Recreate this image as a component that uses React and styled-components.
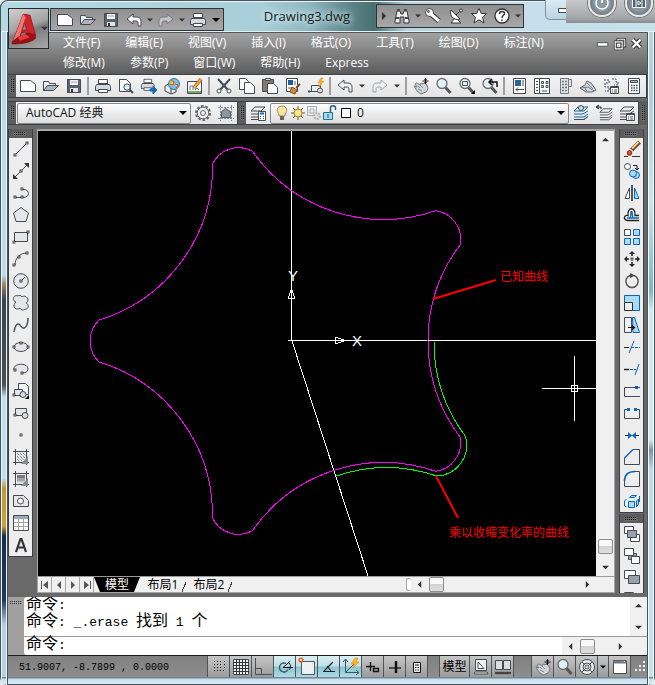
import React, { useState } from 'react';
import styled, { createGlobalStyle, css } from 'styled-components';

const colors = {
  chrome: '#696969',
  panel: '#ededed',
  line: '#3c3f44',
  ink: '#454b54',
  blue: '#0a66b8',
  sky: '#a9dcf2',
  magenta: '#ff00ff',
  green: '#00ff00',
  red: '#ff0000',
};

const uiFont = '"Open Sans", "Noto Sans CJK SC", sans-serif';
const monoFont = '"Liberation Mono", "Noto Sans CJK SC", monospace';

const GlobalStyle = createGlobalStyle`
  * {
    box-sizing: border-box;
  }
  body {
    margin: 0;
    background: #dfe9ef;
    font: 12px/16px ${uiFont};
    overflow: hidden;
  }
  button, input, select {
    margin: 0;
    padding: 0;
    border: 0;
    background: none;
    font: inherit;
    color: inherit;
  }
  button {
    display: inline-flex;
    align-items: center;
    justify-content: center;
    flex: none;
  }
`;

const Frame = styled.div`
  position: relative;
  display: flex;
  flex-direction: column;
  height: 100vh;
  padding: 0 8px 8px 8px;
  border-radius: 8px;
  background:
    linear-gradient(90deg, #4b5358 1px, #e6f3f9 1px, #e6f3f9 2px, transparent 2px, transparent 6px, #e6f3f9 6px, #e6f3f9 7px, #4b5358 7px) 0 0 / 8px 100% no-repeat,
    linear-gradient(90deg, #4b5358 1px, #f6fbfd 1px, #f6fbfd 2px, transparent 2px, transparent 6px, #f6fbfd 6px, #f6fbfd 7px, #4b5358 7px) 100% 0 / 8px 100% no-repeat,
    linear-gradient(0deg, #4b5358 1px, #d8ebf7 1px, #c3dff0 6px, #7a858c 7px) 0 100% / 100% 8px no-repeat,
    linear-gradient(#b5dbe6 0, #bcdce8 275px, #9c7b58 286px, #3a434c 300px, #4d4f50 385px,
      #bfe0ee 397px, #bfe0ee 478px, #c79a30 488px, #d2a032 526px, #14304e 536px, #1d3c5c 600px, #b3d3e4 625px) 0 0 / 8px 100% no-repeat,
    linear-gradient(#b9dbe6 0, #a9d0dd 90px, #cbe4ee 200px, #7fb6c8 290px, #cfe7f2 310px, #cfe7f2 440px,
      #7a93a5 450px, #b9dcee 470px, #c5e2f1 100%) 100% 0 / 8px 100% no-repeat,
    #c3dff0;
`;

const TitleBar = styled.header`
  display: flex;
  align-items: flex-start;
  height: 32px;
  flex: none;
  margin: 0 -8px;
  padding-left: 49px;
  border-top: 1px solid #4b5358;
  border-left: 1px solid #4b5358;
  border-radius: 8px 8px 0 0;
  box-shadow: inset 0 1px 0 #e9f6fa, inset 0 -1px 0 #e3f2f6;
  background: linear-gradient(90deg, #b4dae3 0, #a8cfd9 40%, #8fb8c2 47%, #5f878c 53%, #47706f 57%, #b4d4df 62%, #c7dfec 80%, #c7e0eb 100%);
`;

const AppButton = styled.button`
  position: absolute;
  top: 8px;
  left: 8px;
  width: 41px;
  height: 41px;
  z-index: 2;
  border: 1px solid #26292c;
  background: linear-gradient(160deg, #d0d0d0, #a2a2a2 45%, #7b7b7b 55%, #a9a9a9);
`;

const barStyle = css`
  display: flex;
  align-items: center;
  border: 1px solid #303336;
  background: linear-gradient(#8f8f8f, #a8a8a8);
`;

const QuickBar = styled.div`
  ${barStyle}
  width: 174px;
  height: 23px;
  margin-top: 7px;
  padding-left: 2px;
`;

const DocTitle = styled.h1`
  flex: 1;
  min-width: 0;
  margin: 6px 0 0;
  padding-left: 14px;
  font-size: 13px;
  line-height: 18px;
  font-weight: 400;
  color: #101a20;
  text-align: center;
  text-shadow: 0 0 6px #e8f4f6, 0 0 8px #d6eaee;
`;

const InfoBar = styled.div`
  ${barStyle}
  width: 148px;
  height: 24px;
  margin: 3px 131px 0 0;
  padding-left: 2px;
`;

const CaptionButton = styled.button`
  position: absolute;
  top: 0;
  right: 70px;
  width: 40px;
  height: 20px;
  border: 1px solid #7d929d;
  border-top: 0;
  border-radius: 0 0 0 5px;
  background: linear-gradient(#dcecf5, #b9d3e2);
`;

const Gadget = styled.div`
  position: absolute;
  top: 0;
  right: 0;
  z-index: 3;
  width: 89px;
  height: 23px;
  overflow: hidden;
  background: linear-gradient(#c7c9cc, #a2a4a8 80%, #8b8d91);
`;

const MenuBar = styled.nav`
  display: flex;
  align-items: flex-start;
  height: 42px;
  flex: none;
  padding: 0 2px 0 55px;
  border-top: 1px solid #55595b;
  background: linear-gradient(#a3a3a3, #5b5b5b);
`;

const MenuItems = styled.div`
  display: flex;
  flex: 1;
  flex-wrap: wrap;
  column-gap: 25px;
`;

const MenuItem = styled.button`
  height: 20px;
  color: #fff;
`;

const WindowButtons = styled.div`
  display: flex;
`;

const ToolRow = styled.div`
  display: flex;
  align-items: stretch;
  height: 27px;
  flex: none;
  border-bottom: 3px solid ${colors.chrome};
  background: ${colors.line};
`;

const ToolBar = styled.div`
  display: flex;
  align-items: center;
  flex: ${({ $grow }) => ($grow ? '1' : 'none')};
  min-width: 0;
  border: solid ${colors.line};
  border-width: 1px 1px 1px 0;
  background: linear-gradient(#f4f4f4, #e4e4e4);
`;

const Grip = styled.span`
  flex: none;
  align-self: stretch;
  width: ${({ $across }) => ($across ? 'auto' : '8px')};
  height: ${({ $across }) => ($across ? '9px' : 'auto')};
  border: solid #5c5c5c;
  border-width: ${({ $across }) => ($across ? '3px 6px 2px 4px' : '4px 2px')};
  background: conic-gradient(#141414 25%, transparent 0) 0 0 / 2px 2px;
  background-clip: padding-box;
  background-color: #6c6c6c;
`;

const ToolButton = styled.button`
  width: ${({ $width }) => $width || 23}px;
  height: 22px;
`;

const Divider = styled.span`
  flex: none;
  width: 2px;
  height: 18px;
  margin: 0 2px;
  background: #a0a0a0;
`;

const Combo = styled.label`
  display: flex;
  align-items: center;
  flex: ${({ $grow }) => ($grow ? '1' : 'none')};
  width: ${({ $grow }) => ($grow ? 'auto' : '174px')};
  height: 21px;
  margin-left: 1px;
  padding: 0 3px;
  border: 1px solid #85898e;
  border-radius: 2px;
  background: linear-gradient(#fff, #ececec 50%, #dedede);
`;

const Select = styled.select`
  flex: 1;
  min-width: 0;
  appearance: none;
  outline: 0;
  padding-left: ${({ $pad }) => $pad || 5}px;
  font-size: 12px;
  color: #111;
`;

const Workspace = styled.main`
  display: flex;
  flex: 1;
  min-height: 0;
  padding: 1px 3px 4px 0;
  gap: 4px;
  background: ${colors.chrome};
`;

const SideColumn = styled.div`
  display: flex;
  flex-direction: column;
  gap: 1px;
  flex: none;
  width: 25px;
  overflow: hidden;
`;

const SideBar = styled.div`
  display: flex;
  flex-direction: column;
  align-items: center;
  flex: none;
  border: solid ${colors.line};
  border-width: 0 1px 1px;
  background: ${colors.panel};
`;

const Document = styled.section`
  display: flex;
  flex-direction: column;
  flex: 1;
  min-width: 0;
  border: 1px solid #a5a5a5;
  border-top-width: 2px;
`;

const CanvasRow = styled.div`
  display: flex;
  flex: 1;
  min-height: 0;
`;

const Canvas = styled.svg`
  flex: 1;
  min-width: 0;
  height: 100%;
  background: #000;
`;

const ScrollTrack = styled.div`
  display: flex;
  flex-direction: ${({ $vertical }) => ($vertical ? 'column' : 'row')};
  align-items: center;
  justify-content: ${({ $start }) => ($start ? 'flex-start' : 'space-between')};
  flex: none;
  width: ${({ $width }) => $width}px;
  background: #f0f0f0;
`;

const ScrollButton = styled.button`
  width: 17px;
  height: 17px;
`;

const Thumb = styled.span`
  flex: none;
  width: 15px;
  height: 15px;
  margin: ${({ $push }) => $push || '0'};
  border: 1px solid #8c8c8c;
  border-radius: 2px;
  background: linear-gradient(#f8f8f8 45%, #d3d3d3 50%, #dedede);
`;

const Spacer = styled.span`
  flex: 1;
`;

const Splitter = styled.span`
  width: 5px;
  margin: 1px 0;
  border: 1px solid #a8a8a8;
  border-right: 0;
  border-radius: 2px;
  background: #fff;
`;

const TabRow = styled.div`
  display: flex;
  align-items: stretch;
  height: 16px;
  flex: none;
  border-top: 1px solid #9a9a9a;
  background: #f0f0f0;
`;

const NavButton = styled.button`
  width: 14px;
  border-right: 1px solid #a8a8a8;
`;

const Tab = styled.button`
  width: 46px;
  color: ${({ $active }) => ($active ? '#fff' : '#000')};
  background: ${({ $active }) =>
    $active ? '#000' : 'linear-gradient(112deg, transparent 44px, #444 44px, #444 45px, transparent 45px)'};
  clip-path: ${({ $active }) =>
    $active ? 'polygon(0 0, 100% 0, calc(100% - 6px) 100%, 6px 100%)' : 'none'};
`;

const Command = styled.section`
  display: flex;
  flex: none;
  height: 58px;
  background: #a0a0a0;
`;

const CommandGrip = styled.div`
  width: 16px;
  flex: none;
  padding: 4px 2px;
`;

const CommandBody = styled.div`
  display: flex;
  flex-direction: column;
  flex: 1;
  background: #fff;
  border-radius: 3px 0 0 3px;
  font: 16px/17px ${monoFont};
  color: #000;
`;

const History = styled.div`
  display: flex;
  justify-content: space-between;
  height: 39px;
  flex: none;
  padding-left: 2px;
  white-space: pre;
  overflow: hidden;
`;

const Prompt = styled.label`
  display: flex;
  flex: 1;
  padding-left: 2px;
  border-top: 1px solid #9c9c9c;
`;

const PromptInput = styled.input`
  flex: 1;
  min-width: 0;
  outline: 0;
`;

const Latin = styled.span`
  font-size: 13px;
  line-height: 16px;
`;

const Corner = styled.span`
  width: 18px;
  background: #f0f0f0;
`;

const StatusBar = styled.footer`
  display: flex;
  flex: none;
  height: 22px;
  border-top: 1px solid #1e1e1e;
  background: linear-gradient(#808080, #8e8e8e);
`;

const Coordinates = styled.output`
  flex: 1;
  padding: 4px 0 0 11px;
  font: 10px/16px ${monoFont};
  white-space: pre;
  color: #000;
`;

const StatusButton = styled.button`
  width: ${({ $width }) => $width || 22}px;
  border-left: 1px solid #4e5356;
  background: ${({ $on }) =>
    $on ? 'linear-gradient(#d9f0f4, #bfe0e8 48%, #8cc5d2 52%, #a9dbe6)' : 'linear-gradient(#c6c6c6, #9b9b9b)'};
`;

const StatusGap = styled.span`
  width: ${({ $width }) => $width}px;
  border-left: 1px solid #4e5356;
`;

const Glyph = styled.svg`
  display: block;
  flex: none;
  overflow: visible;
`;

const page = <path d="M.5 2.500h10l5 4v7H.500z" fill="#fff" />;
const printer = (
  <>
    <path d="M3.500 1.500h9v6h-9z" fill="#fff" />
    <path d="M1.500 6.500h13l1 2v4h-15v-4z" fill="#d6d9dd" />
    <path d="M3.500 6h9" strokeWidth="2" />
    <path d="M3.500 11.500h9v3h-9z" fill="#fff" />
  </>
);
const undo = <path d="M1 7l6-5v3h4c3 0 4 2 4 4.500V14h-3v-3c0-1.500-1-2-2-2H7v3z" fill="#f7f7f7" />;
const hand = (
  <>
    <path d="M1 8l3 1-2-3 2-1 3 2 1-2 2 1 1-1 3 2 1 4-2 3-5 2-4-3z" fill="#d2d6da" stroke="#737980" />
    <path d="M5 8l2 2M7 7l3 3M5 11l4 2" stroke="#858b92" />
    <path d="M12.500 0v6M9.500 3h6" stroke="#111" />
    <path d="M11 1.500h3M11 4.500h3" stroke="#111" strokeWidth=".6" />
  </>
);
const lens = (
  <>
    <path d="M9.500 9.500l5 5.500" stroke="#555" strokeWidth="3" />
    <circle cx="6" cy="5.500" r="5" fill="#dff1f4" stroke="#666d73" strokeWidth="1.300" />
    <path d="M3 5c0-2 1-3 3-3" stroke="#fff" />
  </>
);
const layers = <path d="M1 12h10l4-3M1 9h9l5-3M1 14.500h10l4-3M5 2h10L11 6H1z" fill="none" />;
const calc = (
  <>
    <path d="M2.500.5h11v15h-11z" fill="#fff" />
    <path d="M4.500 2.500h7v2h-7z" fill="#aeb4bb" />
    <path d="M5 7.500h7M5 10h7M5 12.500h7" strokeDasharray="1.500 1" strokeWidth="1.500" />
  </>
);
const nodes = (...points) =>
  points.map(([x, y]) => (
    <rect key={`${x}-${y}`} x={x} y={y} width="2" height="2" fill="#fff" stroke="#222" strokeWidth=".8" />
  ));

const icons = {
  page,
  printer,
  undo,
  hand,
  lens,
  calc,
  logo: (
    <>
      <path d="M12 1l6 1 5 18-6 4-3-7-4 1-2 7-6 2z" fill="#d3222a" stroke="#78090d" strokeWidth=".6" />
      <path d="M12 1L2 27l5-1 7-22z" fill="#f47672" stroke="none" />
      <path d="M13 9l2 6-4 1z" fill="#8b8b8b" stroke="#7c1013" strokeWidth=".5" />
      <path d="M7 22l10-4 6 2v3c-5 4-12 5-21 5v-2z" fill="#9b1016" stroke="#6d0a0d" strokeWidth=".5" />
      <path d="M7 22l7-3 4 3-9 3z" fill="#e8383c" stroke="none" />
    </>
  ),
  open: (
    <>
      <path d="M.500 12.500v-9h5l1 2h6v2" fill="#eceff2" />
      <path d="M.500 12.500l4-5h11l-5 5z" fill="#aeb3ba" />
    </>
  ),
  save: (
    <>
      <path d="M1.500 1.500h13v13h-13z" fill="#596270" />
      <path d="M4 2h8v5H4z" fill="#f4f4f4" stroke="none" />
      <path d="M5 4h6" stroke="#9ba3ab" />
      <path d="M4 10h8v4H4z" fill="#e4e4e4" stroke="none" />
      <path d="M6 11v3" stroke="#333" strokeWidth="2" />
    </>
  ),
  redo: <g transform="matrix(-1 0 0 1 16 0)" opacity=".45">{undo}</g>,
  preview: (
    <>
      <path d="M1.500 13.500v-12h7l4 4v8z" fill="#fff" />
      <path d="M11 11l4 4" strokeWidth="2" />
      <circle cx="9" cy="9" r="3.200" fill="#e7f1f4" />
    </>
  ),
  publish: (
    <>
      <g transform="scale(.85)">{printer}</g>
      <path d="M9 11h3V8l4 4-4 4v-3H9z" fill="#1769ba" stroke="#1769ba" />
    </>
  ),
  globe: (
    <>
      <path d="M1 8l5-3 6 3v6l-5 2-6-3z" fill="#e9e9e9" />
      <circle cx="10" cy="6" r="5.500" fill="#6fc4e6" stroke="#317b96" />
      <path d="M7 2l3 2-1 3-3-1M11 6l3 1-2 3" fill="#f6c92c" stroke="#e8442a" />
      <path d="M7 16v-6" />
    </>
  ),
  markup: (
    <>
      <path d="M.500 3.500h14v12H.500z" fill="#f8f8f8" />
      <path d="M1 14h13" stroke="#77ad66" strokeWidth="2" />
      <path d="M3 12V8h3v4M8 12l2-2 2 2" stroke="#5d8ca4" />
      <path d="M7 10l7-9" stroke="#a55217" strokeWidth="3.500" />
      <path d="M7 10l7-9" stroke="#f5b33d" strokeWidth="2" />
    </>
  ),
  cut: (
    <>
      <path d="M2 1l10 11M14 1L4 12" strokeWidth="2" />
      <circle cx="3" cy="13" r="2" fill="#fff" />
      <circle cx="13" cy="13" r="2" fill="#fff" />
    </>
  ),
  copy: (
    <>
      <path d="M.500 11.500V.500h6l3 3v8z" fill="#fff" />
      <path d="M5.500 15.500v-11h6l4 4v7z" fill="#fff" />
    </>
  ),
  paste: (
    <>
      <path d="M.500 1.500h11v12H.500z" fill="#84796e" />
      <path d="M3.500.500h5v2h-5z" fill="#ddd" />
      <path d="M5.500 15.500v-10h6l4 4v6z" fill="#fff" />
    </>
  ),
  match: (
    <>
      <path d="M1.500.500h11v13h-11z" fill="#fff" />
      <path d="M3 2h5v5H3z" fill="#205e9a" stroke="none" />
      <path d="M3 10h4M10 3v4" stroke="#666" />
      <path d="M15 6l-4 4" stroke="#7b4b25" strokeWidth="2" />
      <path d="M7 9l5 3-2 4-5-2z" fill="#db8a37" stroke="#844718" />
    </>
  ),
  blockEdit: (
    <>
      <path d="M3.500 7.500h9v6h-9z" fill="#eee" />
      <path d="M0 13.500h4M1 12v3" />
      <circle cx="12" cy="12.500" r="2.500" fill="#ddd" />
      <path d="M13 0l-3 5h3l-2 4 5-6h-3l2-3z" fill="#ffb31c" stroke="#e38214" strokeWidth=".5" />
    </>
  ),
  zoomWindow: (
    <>
      {lens}
      <path d="M3.500 3.500h5v4h-5z" stroke="#555" />
      <path d="M16 12v4h-4z" fill="#000" stroke="none" />
    </>
  ),
  zoomPrevious: (
    <>
      {lens}
      <path d="M15 9V4H8M10 1L7 4l3 3" stroke="#111" strokeWidth="1.500" />
    </>
  ),
  properties: (
    <>
      <path d="M2.500.500h12v15h-12z" fill="#fff" />
      <path d="M4 2h6v6H4z" fill="#276699" stroke="none" />
      <path d="M12 2v6M5 11.500h8M7 9.500l-2 2 2 2" />
    </>
  ),
  designCenter: (
    <>
      <path d="M.500.500h5v15h-5zM5.500.500h10v15h-10z" fill="#fff" />
      <path d="M3 3v11" strokeDasharray="1 2" strokeWidth="2" />
      <path d="M7.500 3.500h2v2h-2zM12 3.500h2v2h-2zM7.500 7.500h2v2h-2zM12 7.500h2v2h-2zM8 13h5" />
    </>
  ),
  palettes: (
    <>
      <path d="M3.500.500h8v15h-8zM11.500 1.500h3v7h-3z" fill="#e1e4e7" stroke="#737a82" />
      <path d="M5 3.500h5M5 6.500h5M5 9.500h5M5 12.500h5" strokeDasharray="2 1" strokeWidth="1.500" stroke="#737a82" />
    </>
  ),
  sheets: (
    <>
      <path d="M0 10l5-3 2-4 4 2 5 7-4 2H6z" fill="#d7dade" stroke="#5c6167" />
      <path d="M1 10l7-1 6 4M4 9l3 4M7 5l6 6" stroke="#6f757c" />
    </>
  ),
  blocks: (
    <>
      <path d="M1 2h5v3H2v4h4v4H2M9 1h4v3h2v3h-4" strokeDasharray="2 1" />
      <path d="M7.500 8.500h8v7h-8z" fill="#fff" />
      <path d="M8 9.500h7M9 12h1M11 12h3M9 14h1M11 14h3" />
    </>
  ),
  gear: (
    <>
      <circle cx="8" cy="8" r="7" strokeWidth="2" strokeDasharray="2.600 1.800" stroke="#666" />
      <circle cx="8" cy="8" r="5.800" fill="#f0f0f0" stroke="#666" />
      <circle cx="8" cy="8" r="2.500" stroke="#666" />
    </>
  ),
  region: (
    <>
      <path d="M2.500 0v16M13.500 0v16M0 2.500h16M0 13.500h16" strokeDasharray="2 1" stroke="#858b93" />
      <path d="M3.500 12.500v-6l4-3 5 3v6z" fill="#8c96a1" stroke="#555e68" />
    </>
  ),
  layers: (
    <>
      {layers}
      <path d="M8.500 6.500h7v9h-7z" fill="#fff" />
      <path d="M10 8.500h4" stroke={colors.blue} strokeWidth="2" />
      <path d="M10 11.500h1M13 11.500h1M10 13.500h1M13 13.500h1" />
    </>
  ),
  layerCurrent: (
    <>
      <g stroke="#166aaf">{layers}</g>
      <path d="M1 14.500h10l4-3" />
      <circle cx="8" cy="3" r="2.500" fill="#ddd" />
    </>
  ),
  layerPrevious: (
    <>
      <g transform="translate(3 2) scale(.88)">{layers}</g>
      <path d="M5 4V2H1M3 0L0 2l3 2" stroke="#111" />
    </>
  ),
  layerStates: (
    <>
      {layers}
      <path d="M7.500 8.500h8v7h-8z" fill="#fff" />
      <path d="M8 9.500h7M9 12h1M11 12h3M9 14h1M11 14h3" />
    </>
  ),
  bulb: (
    <>
      <path d="M8 1c-5 0-6 5-3 8v2h6V9c3-3 2-8-3-8z" fill="#fbe6a0" stroke="#a18950" />
      <path d="M6 12h4M6 14h4" stroke="#666" strokeWidth="2" />
    </>
  ),
  sun: (
    <>
      <path d="M8 1v14M1 8h14M3 3l10 10M13 3L3 13" stroke="#6b5b3c" />
      <circle cx="8" cy="8" r="4" fill="#ffe48a" stroke="#a58132" />
    </>
  ),
  viewport: (
    <>
      <path d="M1.500 1.500h9v9h-9zM4 4h4v4H4z" stroke="#aaa" />
      <circle cx="11" cy="11" r="3" fill="#ddd" stroke="#b5b5b5" strokeDasharray="2 1" strokeWidth="2" />
    </>
  ),
  lock: (
    <>
      <path d="M1.500 7.500h9v7h-9z" fill="#a0deee" stroke="#276e88" />
      <path d="M8.500 7V3c0-3 5-3 5 0v2" stroke="#2c6078" strokeWidth="1.500" />
      <path d="M6 9v4" stroke="#205a70" />
    </>
  ),
  swatch: <path d="M3.500 3.500h9v9h-9z" fill="#fff" stroke="#000" />,
  binoculars: (
    <>
      <path d="M1 13L3 3h3l1 3h2l1-3h3l2 10v2h-5v-6H6v6H1z" fill="#eceef0" stroke="#33383d" />
      <path d="M3 2h3M10 2h3M2 10h3M11 10h3" strokeWidth="2" />
    </>
  ),
  key: (
    <>
      <path d="M6 6l8 7" stroke="#333" strokeWidth="5" />
      <circle cx="4.500" cy="4.500" r="4" fill="#fff" stroke="#444" />
      <path d="M6 6l8 7" stroke="#fff" strokeWidth="3" />
      <circle cx="3.500" cy="3.500" r="1" fill="#888" />
    </>
  ),
  dish: (
    <>
      <path d="M7 8l6-6M6 11l-3 4h10l-3-3" fill="#fff" stroke="#333" />
      <path d="M3 2c-2 6 3 11 9 9z" fill="#fff" stroke="#333" />
      <circle cx="13" cy="2.500" r="1.500" fill="#fff" stroke="#333" />
    </>
  ),
  star: <path d="M8 .500l2.300 5h5.200l-4 3.800 1.500 5.700L8 11.800 3 15l1.500-5.700-4-3.800h5.200z" fill="#fff" stroke="#333" />,
  help: (
    <>
      <circle cx="8" cy="8" r="7" fill="#fff" stroke="#303438" strokeWidth="1.300" />
      <path d="M5.500 6c0-3.500 5-3 5-.500C10.500 7.500 8 7 8 10M8 11.500v1.500" stroke="#333" strokeWidth="1.500" />
    </>
  ),
  minimize: <path d="M1.500 6.500h12v4h-12z" fill="#fff" />,
  restore: (
    <>
      <path d="M5.500 2.500h8v8h-8z" stroke="#333" strokeWidth="3" />
      <path d="M5.500 2.500h8v8h-8z" fill="#777" stroke="#fff" />
      <path d="M2.500 5.500h8v8h-8z" fill="#777" stroke="#333" strokeWidth="3" />
      <path d="M2.500 5.500h8v8h-8zM5.500 8.500h2v2h-2z" stroke="#fff" strokeWidth="1.300" />
    </>
  ),
  close: (
    <>
      <path d="M3 3l9 9M12 3l-9 9" stroke="#333" strokeWidth="5" />
      <path d="M3 3l9 9M12 3l-9 9" stroke="#fff" strokeWidth="2.500" />
    </>
  ),
  line: <><path d="M2 14L14 2" />{nodes([1, 13], [13, 1])}</>,
  xline: (
    <>
      <path d="M2 14L14 2" />
      <path d="M0 16v-5l5 5zM16 0h-5l5 5z" fill="#333" stroke="none" />
      {nodes([7, 7])}
    </>
  ),
  polyline: <><path d="M2 12.500h8c8 0 7-9-1-8" />{nodes([1, 11], [8, 11], [8, 3])}</>,
  polygon: <path d="M8 .500l7.500 5.500-2.500 8.500H3L.500 6z" fill="#e4e6e9" />,
  rectangle: <><path d="M1.500 3.500h13v9h-13z" fill="#e4e6e9" />{nodes([0, 12], [14, 2])}</>,
  arc: <><path d="M2 14C2 7 7 2 14 2" />{nodes([0, 13], [5, 5], [13, 1])}</>,
  circle: <><circle cx="8" cy="8" r="7.300" fill="#e4e6e9" /><path d="M8 8l4-4" />{nodes([7, 7])}</>,
  cloud: <path d="M3 7C-2 5 1-1 5 1c1-1 3-1 4 1 2-2 6 0 6 3 0 2-1 2-2 3 4 2 2 7-1 6-2 2-4 1-5-1-2 2-6 1-6-2 0-2 1-3 2-4z" fill="#e4e6e9" />,
  spline: <path d="M1 15c1-6 3-10 6-7 4 7 8 1 8-7" strokeWidth="1.400" />,
  ellipse: <><ellipse cx="8" cy="8" rx="7" ry="4.500" fill="#e4e6e9" />{nodes([0, 7], [7, 3], [14, 7])}</>,
  ellipseArc: <><path d="M1 9c-2-7 14-8 14-1 0 3-3 4-6 4" fill="#e4e6e9" />{nodes([1, 8], [8, 11])}</>,
  insertBlock: (
    <>
      <path d="M5.500 8.500v-8h7l3 3v8h-7" fill="#f5f5f5" />
      <path d="M1.500 6.500h8v6h-8z" fill="#e4e6e9" />
      <circle cx="10" cy="11.500" r="3" fill="#ddd" />
      <path d="M16 12v4h-4z" fill="#000" stroke="none" />
      {nodes([0, 11])}
    </>
  ),
  makeBlock: <><path d="M2.500 3.500h11v7h-11z" fill="#e4e6e9" /><circle cx="12" cy="10.500" r="3" fill="#ddd" />{nodes([1, 9])}</>,
  point: nodes([7, 7]),
  hatch: (
    <>
      <path d="M2.500 0v16M13.500 0v16M0 2.500h16M0 13.500h16" />
      <path d="M4 4l8 8M7 4l5 5M10 4l3 3M4 7l6 6M4 10l3 3" strokeDasharray="1 1" />
      <path d="M8 15l7-8v8z" fill="#858b93" stroke="none" />
    </>
  ),
  gradient: (
    <>
      <path d="M2.500 0v16M13.500 0v16M0 2.500h16M0 13.500h16" />
      <path d="M4 4h8v3H4z" fill="#777" stroke="none" />
      <path d="M4 7h8v3H4z" fill="#a3a3a3" stroke="none" />
      <path d="M4 10h8v2H4z" fill="#cecece" stroke="none" />
      <path d="M8 15l7-8v8z" fill="#858b93" stroke="none" />
    </>
  ),
  regionShape: <><path d="M.500 2.500h10l5 5v6H.500z" fill="#e4e6e9" /><circle cx="7.500" cy="8" r="3" fill="#fff" /></>,
  table: (
    <>
      <path d="M.500.500h15v15H.500z" fill="#fff" />
      <path d="M1 2.500h14" stroke="#9aa8b4" strokeWidth="3" />
      <path d="M1 7.500h14M1 11.500h14M5.500 4v11M10.500 4v11" stroke="#a4a4a4" />
    </>
  ),
  text: <path d="M3 15L7.500 2h1L13 15M4.500 10.500h7" stroke="#333" strokeWidth="2.200" />,
  erase: (
    <>
      <path d="M7 9.500L15.500 1" stroke="#6b4a25" strokeWidth="4" />
      <path d="M8 7.500L14.500 1" stroke="#f2cf8c" strokeWidth="2" />
      <path d="M5.500 8.500l3 3" stroke="#ddd" strokeWidth="3" />
      <circle cx="5.500" cy="12" r="2.300" fill="#dc4a22" stroke="#8d2c12" />
      <path d="M0 15.500h4M8 15.500h8" stroke="#333" />
    </>
  ),
  copyObject: (
    <>
      <circle cx="3.500" cy="3.500" r="3" fill="#fff" />
      <path d="M9 2.500h4v4M11 5l2 2 2-2" stroke="#111" />
      <circle cx="12" cy="12" r="3.500" fill={colors.sky} stroke={colors.blue} />
      <circle cx="9" cy="10.500" r="3.500" fill={colors.sky} stroke={colors.blue} />
    </>
  ),
  mirror: (
    <>
      <path d="M5.500 3v10.500H1z" fill="#fff" />
      <path d="M10.500 3v10.500H15z" fill={colors.sky} stroke={colors.blue} />
      <path d="M8 0v16" stroke="#222" strokeWidth="1.500" />
    </>
  ),
  offset: (
    <>
      <path d="M15 13.500H3c-4-1-3-6 1-5-1-9 8-9 7 0h4" stroke="#222" strokeWidth="1.300" />
      <path d="M15 11H3M6 10.500c2-2 0-6 1.500-6s0 4 1.500 6" stroke={colors.blue} strokeWidth="1.300" />
    </>
  ),
  array: (
    <>
      <path d="M.500.500h6v6h-6z" fill="#fff" />
      <path d="M9.500.500h6v6h-6zM.500 9.500h6v6h-6zM9.500 9.500h6v6h-6z" fill={colors.sky} stroke={colors.blue} />
    </>
  ),
  move: (
    <>
      <path d="M8 2v3M8 11v3M2 8h3M11 8h3" stroke="#222" strokeWidth="1.500" />
      <path d="M8 0l3 3H5zM8 16l3-3H5zM0 8l3-3v6zM16 8l-3-3v6z" fill="#222" stroke="none" />
      {nodes([7, 7])}
    </>
  ),
  rotate: (
    <>
      <path d="M10 2.500a6.200 6.200 0 1 1-4 0" strokeWidth="1.500" stroke="#555" />
      <path d="M6 0l5 2.500L6 5z" fill="#444" stroke="none" />
    </>
  ),
  scale: (
    <>
      <path d="M.500.500h15v15H.500z" fill={colors.sky} stroke={colors.blue} />
      <path d="M.500 7.500h8v8h-8z" fill="#eee" stroke="#333" />
    </>
  ),
  stretch: (
    <>
      <path d="M8.500.500h2l5 15H9z" fill={colors.sky} stroke={colors.blue} />
      <path d="M.500.500h7v15h-7z" fill="#f0f0f0" />
      <path d="M4 10.500h6M8 8.500l2.500 2L8 12.500" stroke="#111" strokeWidth="1.200" />
    </>
  ),
  trim: <><path d="M0 8.500h5" stroke="#222" /><path d="M7 8.500h9" stroke={colors.blue} strokeDasharray="3 1" /><path d="M5 14L10 2" stroke={colors.blue} /></>,
  extend: <><path d="M0 8.500h5" stroke="#222" strokeWidth="1.500" /><path d="M6 8.500h6" stroke={colors.blue} strokeDasharray="3 1" /><path d="M11 14l4-11" stroke={colors.blue} /></>,
  breakPoint: <><path d="M16 13.500H.500v-9H16" fill="#eee" /><path d="M11 3h3v3h-3z" fill={colors.blue} stroke="none" /></>,
  breakGap: <><path d="M5 4.500H.500v9h15v-9H12" fill="#eee" /><path d="M3 3h3v3H3zM10 3h3v3h-3z" fill={colors.blue} stroke="none" /></>,
  join: <><path d="M1 8.500h14" stroke="#222" /><path d="M4 5l4 3.500L4 12zM12 5L8 8.500l4 3.500z" fill={colors.blue} stroke="none" /></>,
  chamfer: <><path d="M.500 9v6.500h15V.500H9" fill="#eee" /><path d="M.500 9L9 .500" stroke={colors.blue} strokeWidth="1.500" /></>,
  fillet: <><path d="M.500 9v6.500h15V.500H11" fill="#eee" /><path d="M.500 10C.500 4 4 .500 11 .500" stroke={colors.blue} strokeWidth="1.500" /></>,
  explode: (
    <>
      <path d="M5.500 4.500l2-2h5l-2 2zM12.500 8l2-2v5l-2 3z" fill={colors.sky} stroke={colors.blue} />
      <path d="M4.500 8.500h6v6h-6z" fill={colors.sky} stroke={colors.blue} />
      <path d="M2.500 6l-2 2v5l2 1M15.500 3v6" stroke={colors.blue} />
    </>
  ),
  front: <><path d="M.500 .500h9v7h-9zM6.500 8.500h9v7h-9z" fill="#fff" /><path d="M3.500 4.500h9v7h-9z" fill="#98a1ac" /></>,
  back: <><path d="M4.500 5.500h8v6h-8z" fill="#98a1ac" /><path d="M.500.500h9v7h-9zM7.500 8.500h8v7h-8z" fill="#fff" /></>,
  above: <><path d="M.500.500h11v8H.500z" fill="#fff" /><path d="M4.500 5.500h11v8h-11z" fill="#98a1ac" /></>,
  snap: <path d="M3 2.500h8M3 5.500h8M3 8.500h8M3 11.500h11M13.500 2v8" strokeDasharray="1 2" stroke="#111" />,
  grid: <><path d="M.500.500h15v15H.500z" fill="#eee" /><path d="M3.500 0v16M6.500 0v16M9.500 0v16M12.500 0v16M0 3.500h16M0 6.500h16M0 9.500h16M0 12.500h16" stroke="#333" /></>,
  ortho: <path d="M.500-1v16.500H17M.500 9.500h6v6" stroke="#4a4f55" />,
  polar: (
    <>
      <path d="M11 10.500a4.500 4.500 0 1 1-2-6" stroke="#3e525b" strokeWidth="1.300" />
      <path d="M6 8.500h10M6 8.500l7-6M12 4c2 2 2 5 0 7" stroke="#111" />
    </>
  ),
  osnap: <><path d="M2.500 2.500h13v13h-13z" fill="#eef0f3" stroke="#4e5963" /><circle cx="2" cy="1" r="1.800" fill="#fff" stroke="#eb5a1a" strokeWidth="1.500" /></>,
  otrack: <path d="M2 12.500h12M3 12L12 3M6 7l4 5" stroke="#222" strokeWidth="1.200" />,
  ducs: (
    <>
      <path d="M2.500 0v13.500H16M3 13L11 5M0 3l2.500-3L5 3M13 11l3 2.500-3 2.500" stroke="#445560" />
      <path d="M12-1L8 5h3l-1 4 6-6h-3l2-4z" fill="#ffb31c" stroke="#e38214" strokeWidth=".5" />
    </>
  ),
  dynamic: <path d="M1 7.500h9M5.500 3v9M8.500 9.500h5v3h-5z" stroke="#111" strokeWidth="1.300" />,
  lineWidth: <><path d="M2 9h12" stroke="#111" strokeWidth="1.300" /><path d="M9 2v12" stroke="#111" strokeWidth="2.500" /></>,
  quick: <><path d="M4.500 3.500h7v10h-7z" fill="#eee" stroke="#111" /><path d="M6 6h4M6 8.500h1.500M8.500 8.500H10M6 11h1.500M8.500 11H10" stroke="#222" /></>,
  layout: <><path d="M2.500.500h11v11h-11z" fill="#f0f0f0" /><path d="M5 9.500V3l6 6.500z" fill="#fff" /><path d="M1 15l1-2h12l1 2z" fill="#eee" /></>,
  drawings: <><path d="M.500 1.500h7v9h-7zM8.500 1.500h7v9h-7z" fill="#ddd" /><path d="M0 14h16" stroke="#444" strokeWidth="2.500" /></>,
  wheel: <><circle cx="8" cy="8" r="7.500" fill="#e9ecee" /><circle cx="8" cy="8" r="4" fill="#fff" /><path d="M3 3l10 10M13 3L3 13" /><circle cx="8" cy="8" r="2" fill="#ddd" /></>,
  window: <><path d="M1.500 1.500h13v13h-13z" fill="#fff" /><path d="M1.500 3h13" stroke="#6e7780" strokeWidth="3" /><path d="M10 2.500h4" stroke="#fff" strokeDasharray="1 1" /></>,
  resize: <path d="M12 6h2M8 10h2M12 10h2M4 14h2M8 14h2M12 14h2" stroke="#f3f0e6" strokeWidth="2" />,
  power: <><circle cx="8" cy="8" r="6" stroke="#fff" strokeWidth="1.500" /><path d="M8 3v5" stroke="#fff" strokeWidth="2" /></>,
  media: <><path d="M1.500 3.500h13v9h-13z" fill="#4d6273" stroke="#fff" /><path d="M5 4v8M11 4v8M7 6l3 2-3 2z" stroke="#fff" /></>,
};

const Icon = ({ name, size = 16, box = 16 }) => (
  <Glyph width={size} height={size} viewBox={`0 0 ${box} ${box}`} fill="none" stroke={colors.ink} aria-hidden="true">
    {icons[name]}
  </Glyph>
);

const arrowPaths = {
  down: 'M0 2h8L4 6z',
  up: 'M0 6h8L4 2z',
  left: 'M6 0v8L2 4z',
  right: 'M2 0v8l4-4z',
  first: 'M0 0h1v8H0zM7 0v8L2 4z',
  last: 'M7 0h1v8H7zM1 0v8l5-4z',
};

const Arrow = ({ to, size = 8, color = '#333' }) => (
  <Glyph width={size} height={size} viewBox="0 0 8 8" fill={color} aria-hidden="true">
    <path d={arrowPaths[to]} />
  </Glyph>
);

const Round = styled.span`
  position: absolute;
  top: -11px;
  left: ${({ $left }) => $left}px;
  display: flex;
  align-items: center;
  justify-content: center;
  width: 28px;
  height: 28px;
  border: 2px solid #e8e8e2;
  border-radius: 50%;
  background: radial-gradient(#8d9aa3 45%, #4c5861);
  box-shadow: 0 0 0 1px #777;
`;

const standardTools = [
  'page', 'open', 'save', '|', 'printer', 'preview', 'publish', 'globe', 'markup', '|',
  'cut', 'copy', 'paste', 'match', 'blockEdit', '|', 'undo', 'v', 'redo', 'v', '|',
  'hand', 'lens', 'zoomWindow', 'zoomPrevious', '|',
  'properties', 'designCenter', 'palettes', 'sheets', 'blocks', 'calc',
];
const drawTools = [
  'line', 'xline', 'polyline', 'polygon', 'rectangle', 'arc', 'circle', 'cloud', 'spline', 'ellipse',
  'ellipseArc', 'insertBlock', 'makeBlock', 'point', 'hatch', 'gradient', 'regionShape', 'table', 'text',
];
const modifyTools = [
  'erase', 'copyObject', 'mirror', 'offset', 'array', 'move', 'rotate', 'scale', 'stretch',
  'trim', 'extend', 'breakPoint', 'breakGap', 'join', 'chamfer', 'fillet', 'explode',
];
const orderTools = ['front', 'back', 'above', 'front'];
const menus = [
  '文件(F)', '编辑(E)', '视图(V)', '插入(I)', '格式(O)', '工具(T)', '绘图(D)', '标注(N)',
  '修改(M)', '参数(P)', '窗口(W)', '帮助(H)', 'Express',
];
const modes = ['snap', 'grid', 'ortho', 'polar', 'osnap', 'otrack', 'ducs', 'dynamic', 'lineWidth', 'quick'];

const polar = (r, degrees) => {
  const a = (degrees * Math.PI) / 180;
  return `${(r * Math.cos(a)).toFixed(1)} ${(r * Math.sin(a)).toFixed(1)}`;
};

// five lobes, one every 72 degrees, joined by inward arcs
const starPath = () => {
  let d = `M${polar(194, -29.8)}`;
  for (let tip = 36; tip < 396; tip += 72) {
    d += `A160 160 0 0 0 ${polar(194, tip - 6.2)}A29 29 0 0 1 ${polar(194, tip + 6.2)}`;
  }
  return d;
};

const outerPath = `M${polar(142, 0)}A157 157 0 0 0 ${polar(198, 28.8)}A31 31 0 0 1 ${polar(198, 43)}A157 157 0 0 0 ${polar(142, 72)}`;

const Drawing = () => (
  <Canvas viewBox="-254 -210 558 445" preserveAspectRatio="xMinYMin slice" fill="none">
    <g shapeRendering="crispEdges">
      <path d="M-.500-210V0M-4-.500H304M0 0L76 235" stroke="#fff" />
      <path d="M-.500-53l-3 10h6zM-.500-50v7M53-.500L43-4v7zM43-.500h7" stroke="#fff" />
      <path d={starPath()} stroke={colors.magenta} />
      <path d={outerPath} stroke={colors.green} />
      <path d="M250 47.500H304M282.500 15v65M279.500 44.500h6v6h-6z" stroke="#fff" />
    </g>
    <path d="M141-42l63-19M144 135l22 42" stroke={colors.red} strokeWidth="2" />
    <g fontFamily={uiFont} fontSize="12">
      <text x="60" y="5" fontSize="15" fontFamily="Liberation Sans, sans-serif" fill="#fff">X</text>
      <text x="-4" y="-60" fontSize="15" fontFamily="Liberation Sans, sans-serif" fill="#fff">Y</text>
      <text x="208" y="-60" fill={colors.red}>已知曲线</text>
      <text x="157" y="196" fill={colors.red}>乘以收缩变化率的曲线</text>
    </g>
  </Canvas>
);

const SideTools = ({ tools }) => (
  <SideBar>
    <Grip $across />
    {tools.map((name, i) => (
      <ToolButton key={i} aria-label={name}>
        <Icon name={name} />
      </ToolButton>
    ))}
  </SideBar>
);

export default function App() {
  const [tab, setTab] = useState('模型');
  const [active, setActive] = useState(['polar', 'osnap', 'otrack', 'ducs']);

  const toggle = (mode) =>
    setActive((list) => (list.includes(mode) ? list.filter((m) => m !== mode) : [...list, mode]));

  return (
    <Frame>
      <GlobalStyle />
      <TitleBar>
        <QuickBar>
          {['page', 'open', 'save', 'undo'].map((name) => (
            <ToolButton key={name} aria-label={name}><Icon name={name} /></ToolButton>
          ))}
          <ToolButton $width={9} aria-label="undo list"><Arrow to="down" size={6} /></ToolButton>
          <ToolButton aria-label="redo"><Icon name="redo" /></ToolButton>
          <ToolButton $width={9} aria-label="redo list"><Arrow to="down" size={6} /></ToolButton>
          <ToolButton aria-label="printer"><Icon name="printer" /></ToolButton>
          <ToolButton $width={14} aria-label="customize"><Arrow to="down" color="#000" /></ToolButton>
        </QuickBar>
        <DocTitle>Drawing3.dwg</DocTitle>
        <InfoBar>
          <ToolButton $width={10} aria-label="expand"><Arrow to="right" /></ToolButton>
          <ToolButton $width={25} aria-label="search"><Icon name="binoculars" /></ToolButton>
          <ToolButton $width={7} aria-label="search list"><Arrow to="down" size={6} /></ToolButton>
          {['key', 'dish', 'star', 'help'].map((name) => (
            <ToolButton key={name} aria-label={name}><Icon name={name} /></ToolButton>
          ))}
          <ToolButton $width={9} aria-label="help list"><Arrow to="down" size={6} /></ToolButton>
        </InfoBar>
        <CaptionButton aria-label="minimize"><Icon name="minimize" /></CaptionButton>
      </TitleBar>
      <AppButton aria-label="application menu">
        <Icon name="logo" size={31} box={28} />
        <Arrow to="down" size={7} />
      </AppButton>
      <Gadget>
        <Round $left={22}><Icon name="power" size={16} /></Round>
        <Round $left={59}><Icon name="media" size={16} /></Round>
      </Gadget>

      <MenuBar>
        <MenuItems>
          {menus.map((label) => <MenuItem key={label}>{label}</MenuItem>)}
        </MenuItems>
        <WindowButtons>
          {['minimize', 'restore', 'close'].map((name) => (
            <ToolButton key={name} $width={17} aria-label={name}><Icon name={name} size={14} /></ToolButton>
          ))}
        </WindowButtons>
      </MenuBar>

      <ToolRow>
        <ToolBar $grow>
          <Grip />
          {standardTools.map((name, i) => {
            if (name === '|') return <Divider key={i} />;
            if (name === 'v') return <ToolButton key={i} $width={12} aria-label="list"><Arrow to="down" size={6} /></ToolButton>;
            return <ToolButton key={i} aria-label={name}><Icon name={name} /></ToolButton>;
          })}
        </ToolBar>
      </ToolRow>

      <ToolRow>
        <ToolBar>
          <Grip />
          <Combo>
            <Select aria-label="workspace">
              <option>AutoCAD 经典</option>
            </Select>
            <Arrow to="down" color="#000" />
          </Combo>
          <ToolButton aria-label="settings"><Icon name="gear" /></ToolButton>
          <ToolButton aria-label="workspace region"><Icon name="region" /></ToolButton>
        </ToolBar>
        <ToolBar $grow>
          <Grip />
          <ToolButton aria-label="layers"><Icon name="layers" /></ToolButton>
          <Combo $grow>
            {['bulb', 'sun', 'viewport', 'lock', 'swatch'].map((name) => <Icon key={name} name={name} />)}
            <Select $pad={3} aria-label="layer">
              <option>0</option>
            </Select>
            <Arrow to="down" color="#000" />
          </Combo>
          {['layerCurrent', 'layerPrevious', 'layerStates'].map((name) => (
            <ToolButton key={name} aria-label={name}><Icon name={name} /></ToolButton>
          ))}
        </ToolBar>
        <Grip />
      </ToolRow>

      <Workspace>
        <SideColumn>
          <SideTools tools={drawTools} />
        </SideColumn>
        <Document>
          <CanvasRow>
            <Drawing />
            <ScrollTrack $vertical $width={18}>
              <ScrollButton aria-label="up"><Arrow to="up" size={7} /></ScrollButton>
              <Spacer />
              <Thumb $push="0 0 5px" />
              <ScrollButton aria-label="down"><Arrow to="down" size={7} /></ScrollButton>
            </ScrollTrack>
          </CanvasRow>
          <TabRow>
            {['first', 'left', 'right', 'last'].map((to) => (
              <NavButton key={to} aria-label={to}><Arrow to={to} color="#555" /></NavButton>
            ))}
            {['模型', '布局1', '布局2'].map((name) => (
              <Tab key={name} $active={tab === name} onClick={() => setTab(name)}>{name}</Tab>
            ))}
            <Spacer />
            <Splitter />
            <ScrollTrack $start $width={185}>
              <ScrollButton aria-label="left"><Arrow to="left" size={7} /></ScrollButton>
              <Thumb $push="0 auto 0 1px" />
              <ScrollButton aria-label="right"><Arrow to="right" size={7} /></ScrollButton>
            </ScrollTrack>
            <Corner />
          </TabRow>
        </Document>
        <SideColumn>
          <SideTools tools={modifyTools} />
          <SideTools tools={orderTools} />
        </SideColumn>
      </Workspace>

      <Command>
        <CommandGrip>
          <Glyph width="12" height="4" stroke="#333" strokeDasharray="1 1">
            <path d="M0 .500h12M0 2.500h12" />
          </Glyph>
        </CommandGrip>
        <CommandBody>
          <History>
            <div>
              <div>命令<Latin>:</Latin></div>
              <div>命令<Latin>: _.erase </Latin>找到<Latin> 1 </Latin>个</div>
            </div>
            <ScrollTrack $vertical $width={17}>
              <ScrollButton aria-label="up"><Arrow to="up" size={7} /></ScrollButton>
              <ScrollButton aria-label="down"><Arrow to="down" size={7} /></ScrollButton>
            </ScrollTrack>
          </History>
          <Prompt>
            <span>命令<Latin>:</Latin></span>
            <PromptInput aria-label="命令" />
            <ScrollTrack $start $width={67}>
              <ScrollButton aria-label="left"><Arrow to="left" size={7} /></ScrollButton>
              <Thumb $push="0 auto 0 1px" />
              <ScrollButton aria-label="right"><Arrow to="right" size={7} /></ScrollButton>
            </ScrollTrack>
            <Corner />
          </Prompt>
        </CommandBody>
      </Command>

      <StatusBar>
        <Coordinates>51.9007, -8.7899 , 0.0000</Coordinates>
        {modes.map((mode) => (
          <StatusButton key={mode} $on={active.includes(mode)} aria-label={mode} onClick={() => toggle(mode)}>
            <Icon name={mode} />
          </StatusButton>
        ))}
        <StatusGap $width={12} />
        <StatusButton $width={30}>模型</StatusButton>
        <StatusButton aria-label="layout"><Icon name="layout" /></StatusButton>
        <StatusButton aria-label="drawings"><Icon name="drawings" /></StatusButton>
        <StatusGap $width={18} />
        {['hand', 'lens', 'wheel'].map((name) => (
          <StatusButton key={name} aria-label={name}><Icon name={name} /></StatusButton>
        ))}
        <StatusButton $width={11} aria-label="list"><Arrow to="down" size={6} color="#000" /></StatusButton>
        <StatusButton aria-label="window"><Icon name="window" /></StatusButton>
        <StatusGap $width={17}><Icon name="resize" /></StatusGap>
      </StatusBar>
    </Frame>
  );
}
